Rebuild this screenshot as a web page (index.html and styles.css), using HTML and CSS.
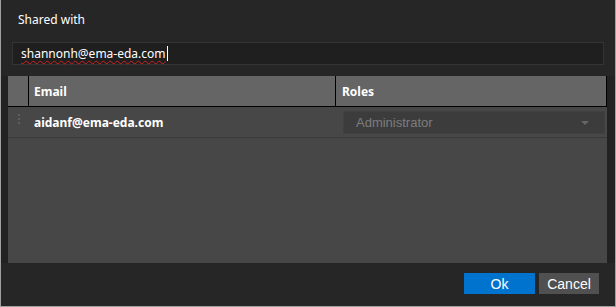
FILE: index.html
```html
<!DOCTYPE html>
<html lang="en">
  <head>
    <meta charset="UTF-8" />
    <meta name="viewport" content="width=device-width, initial-scale=1.0" />
    <title>Shared with</title>
    <link rel="stylesheet" href="styles.css">
  </head>
  <body>
    <div class="dialog">
      <div class="title">Shared with</div>

      <div class="field">
        <span class="field-text">shannonh@ema-eda.com</span><span class="caret"></span>
      </div>

      <!-- Grid -->
      <div class="grid-band">
        <div class="grid">
          <div class="grid-head">
            <div class="cell handle-col"></div>
            <div class="cell email-col">Email</div>
            <div class="cell roles-col">Roles</div>
          </div>
          <div class="grid-row">
            <div class="cell handle-col">
              <span class="dots"><i></i><i></i><i></i></span>
            </div>
            <div class="cell email-col">aidanf@ema-eda.com</div>
            <div class="cell roles-col">
              <div class="select">
                <span>Administrator</span>
                <span class="arrow"></span>
              </div>
            </div>
          </div>
        </div>
      </div>

      <div class="buttons">
        <button class="btn ok">Ok</button>
        <button class="btn cancel">Cancel</button>
      </div>
    </div>
  </body>
</html>
```

FILE: styles.css
```css
body {
  margin: 0;
  background: #262626;
  font-family: "Noto Sans", "DejaVu Sans", sans-serif;
  font-size: 12px;
  color: #fff;
}

.dialog {
  box-sizing: border-box;
  width: 616px;
  height: 307px;
  border-left: 1px solid #a0a0a0;
  border-right: 1px solid #a0a0a0;
  border-bottom: 1px solid #a0a0a0;
  display: flex;
  flex-direction: column;
}

.title {
  height: 42px;
  padding: 10px 0 0 17px;
  box-sizing: border-box;
  line-height: 20px;
}

/* Text input */
.field {
  box-sizing: border-box;
  margin-left: 11px;
  width: 592px;
  height: 23px;
  background: #1f1f1f;
  border: 1px solid #343434;
  padding-left: 8px;
  display: flex;
  align-items: center;
}
.field-text {
  text-decoration: underline wavy #d02020;
  text-decoration-thickness: 1px;
  text-underline-offset: 2px;
}
.caret {
  width: 1px;
  height: 15px;
  background: #fff;
  margin-left: 1px;
}

/* Grid */
.grid-band {
  margin-top: 11px;
  height: 187px;
  background: #222;
  padding-left: 7px;
}
.grid {
  width: 599px;
  height: 100%;
  background: #474747;
}
.grid-head {
  display: flex;
  height: 30px;
  background: #656565;
  border-bottom: 1px solid #000;
  border-right: 1px solid #000;
  font-weight: bold;
}
.grid-head .cell {
  border-right: 1px solid #000;
}
.grid-head .roles-col {
  border-right: none;
}
.grid-row {
  display: flex;
  height: 30px;
  border-bottom: 1px solid #3a3a3a;
  font-weight: bold;
}
.cell {
  display: flex;
  align-items: center;
  box-sizing: border-box;
}
.handle-col {
  width: 21px;
  justify-content: center;
}
.email-col {
  width: 307px;
  padding-left: 5px;
}
.roles-col {
  flex: 1;
  padding-left: 6px;
}
.grid-row .roles-col {
  padding-left: 7px;
}

.dots {
  display: flex;
  flex-direction: column;
  gap: 2px;
  align-self: flex-start;
  margin-top: 7px;
}
.dots i {
  width: 2px;
  height: 2px;
  background: #5e5e5e;
}

.select {
  box-sizing: border-box;
  width: 262px;
  height: 23px;
  background: #3c3c3c;
  border: 1px solid #404040;
  display: flex;
  align-items: center;
  justify-content: space-between;
  padding: 0 15px 0 12px;
  font-family: "Liberation Sans", Arial, sans-serif;
  font-size: 13px;
  font-weight: normal;
  color: #7c7c7c;
}
.arrow {
  width: 0;
  height: 0;
  border-left: 4px solid transparent;
  border-right: 4px solid transparent;
  border-top: 4px solid #666;
  margin-top: 2px;
}

/* Buttons */
.buttons {
  display: flex;
  justify-content: flex-end;
  gap: 4px;
  padding: 10px 16px 0 0;
}
.btn {
  height: 21px;
  border: none;
  color: #fff;
  font-family: "Liberation Sans", Arial, sans-serif;
  font-size: 14px;
  padding: 0;
}
.ok {
  width: 71px;
  background: #0073cf;
}
.cancel {
  width: 60px;
  background: #505050;
}
```
